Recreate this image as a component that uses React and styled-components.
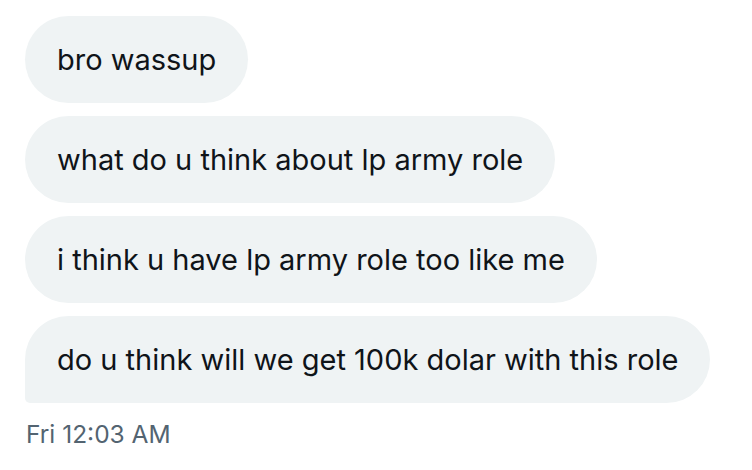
import React from 'react';
import styled, { createGlobalStyle } from 'styled-components';

const Global = createGlobalStyle`
  body {
    margin: 0;
    background: #ffffff;
    font-family: Inter, "Noto Sans", sans-serif;
  }
`;

const Thread = styled.main`
  display: flex;
  flex-direction: column;
  align-items: flex-start;
  gap: 13px;
  padding: 16px 0 0 25px;
`;

const Bubble = styled.div`
  background: #eff3f4;
  color: #0f1419;
  font-size: 29px;
  line-height: 87px;
  height: 87px;
  padding: 0 32px;
  border-radius: 44px;
  border-bottom-left-radius: ${(p) => (p.$last ? '5px' : '44px')};
  white-space: nowrap;
`;

const Stamp = styled.div`
  color: #536471;
  font-size: 24.5px;
  margin-top: 3px;
  padding-left: 1px;
`;

const messages = [
  'bro wassup',
  'what do u think about lp army role',
  'i think u have lp army role too like me',
  'do u think will we get 100k dolar with this role',
];

export default () => (
  <>
    <Global />
    <Thread>
      {messages.map((m, i) => (
        <Bubble key={m} $last={i === messages.length - 1}>
          {m}
        </Bubble>
      ))}
      <Stamp>Fri 12:03 AM</Stamp>
    </Thread>
  </>
);
